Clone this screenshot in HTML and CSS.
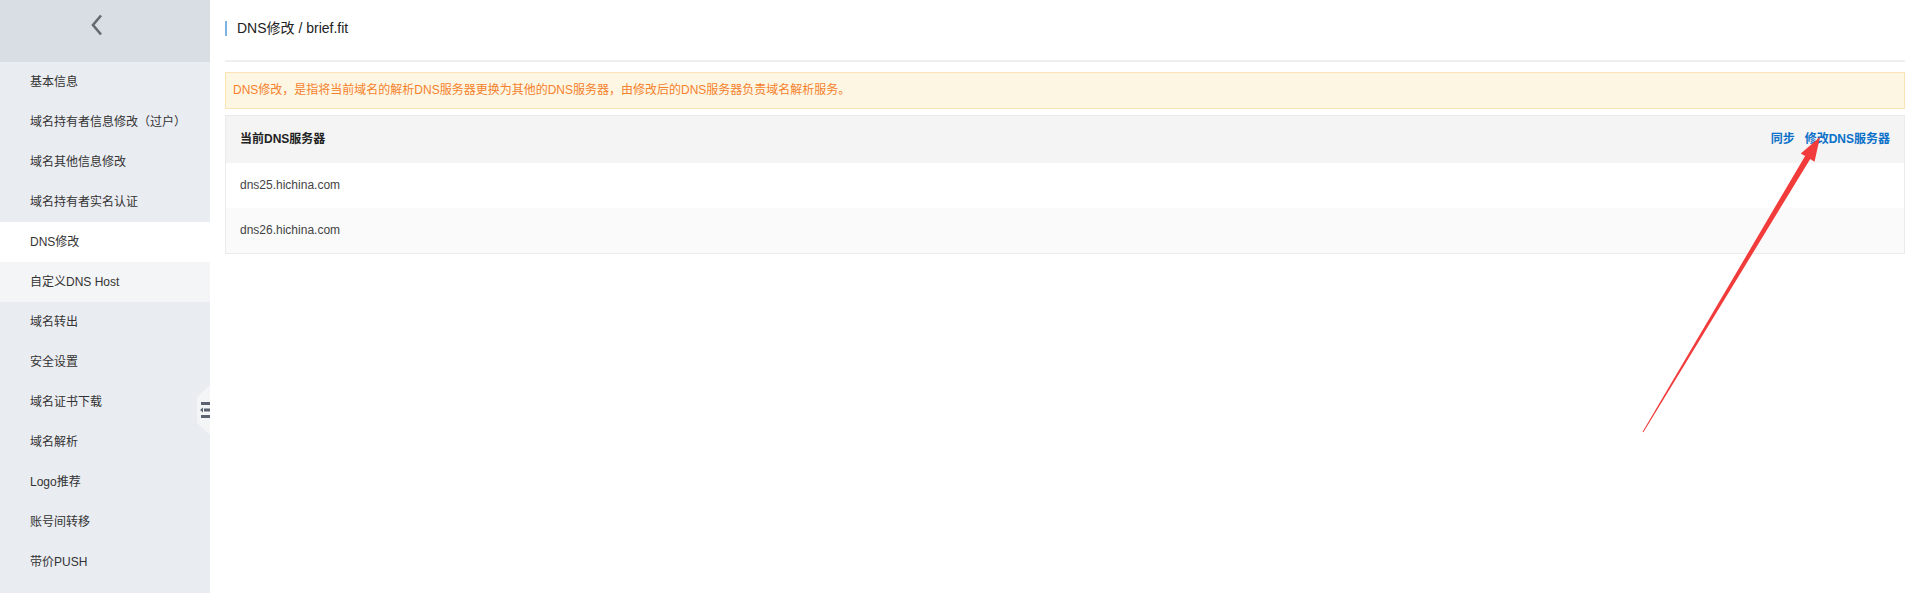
FILE: index.html
```html
<!DOCTYPE html>
<html lang="zh-CN">
<head>
<meta charset="utf-8">
<title>DNS修改</title>
<link rel="stylesheet" href="styles.css">
</head>
<body>
<div class="page">
  <aside class="sidebar">
    <div class="side-head">
      <svg class="back" width="12" height="22" viewBox="0 0 12 22"><path d="M10 1.5 L2 11 L10 20.5" fill="none" stroke="#666a70" stroke-width="2.6"/></svg>
    </div>
    <ul class="menu">
      <li>基本信息</li>
      <li>域名持有者信息修改（过户）</li>
      <li>域名其他信息修改</li>
      <li>域名持有者实名认证</li>
      <li class="active">DNS修改</li>
      <li class="hover">自定义DNS Host</li>
      <li>域名转出</li>
      <li>安全设置</li>
      <li>域名证书下载</li>
      <li>域名解析</li>
      <li>Logo推荐</li>
      <li>账号间转移</li>
      <li>带价PUSH</li>
    </ul>
    <div class="collapse">
      <svg width="11" height="18" viewBox="0 0 11 18"><rect x="1" y="1" width="10" height="3" fill="#5b6372"/><rect x="4" y="7.5" width="7" height="3" fill="#5b6372"/><path d="M0 9 L3 6.5 L3 11.5 Z" fill="#5b6372"/><rect x="1" y="14" width="10" height="3" fill="#5b6372"/></svg>
    </div>
  </aside>
  <main class="main">
    <div class="title-bar"><h1 class="title">DNS修改 / brief.fit</h1></div>
    <div class="notice">DNS修改，是指将当前域名的解析DNS服务器更换为其他的DNS服务器，由修改后的DNS服务器负责域名解析服务。</div>
    <div class="dns-table">
      <div class="row head">
        <span class="th">当前DNS服务器</span>
        <span class="actions"><a class="link">同步</a><a class="link">修改DNS服务器</a></span>
      </div>
      <div class="row">dns25.hichina.com</div>
      <div class="row alt">dns26.hichina.com</div>
    </div>
  </main>
  <svg class="annotation" width="1920" height="593" viewBox="0 0 1920 593">
    <polygon points="1642.6,431.7 1805.1,156.0 1800.8,153.5 1820,137 1814.5,161.7 1810.2,159.1 1643.4,432.3" fill="#f23b3b"/>
  </svg>
</div>
</body>
</html>
```
FILE: styles.css
```css
* { box-sizing: border-box; }
html, body { margin: 0; padding: 0; }
body {
  font-family: "Liberation Sans", "Noto Sans CJK SC", sans-serif;
  font-size: 12px;
  color: #333;
  background: #fff;
}
.page {
  position: relative;
  display: flex;
  width: 1920px;
  height: 593px;
  overflow: hidden;
}
.sidebar {
  position: relative;
  width: 210px;
  flex: none;
  background: #e9ecf1;
}
.side-head {
  height: 62px;
  background: #d9dde4;
  display: flex;
  align-items: center;
  justify-content: center;
  padding-bottom: 12px;
  padding-right: 16px;
}
.menu {
  list-style: none;
  margin: 0;
  padding: 0;
}
.menu li {
  height: 40px;
  line-height: 41px;
  padding-left: 30px;
  color: #333;
  white-space: nowrap;
}
.menu li.active { background: #fff; }
.menu li.hover { background: #f4f5f7; }
.collapse {
  position: absolute;
  right: 0;
  top: 385px;
  width: 13px;
  height: 50px;
  background: #f4f5f7;
  clip-path: polygon(0 12px, 13px 0, 13px 50px, 0 38px);
  display: flex;
  align-items: center;
  justify-content: flex-end;
}
.collapse svg { display: block; margin-right: -1px; }
.main {
  flex: 1;
  padding: 0 15px;
}
.title-bar {
  height: 62px;
  border-bottom: 2px solid #efefef;
  padding-top: 21px;
}
.title {
  margin: 0;
  font-size: 14px;
  font-weight: normal;
  line-height: 15px;
  color: #222;
  border-left: 2px solid #7fb2e0;
  padding-left: 10px;
}
.notice {
  margin-top: 10px;
  height: 37px;
  line-height: 35px;
  background: #fdf6e3;
  border: 1px solid #fbe3b6;
  color: #f5812c;
  padding-left: 7px;
}
.dns-table {
  margin-top: 6px;
  border: 1px solid #ebebeb;
}
.row {
  height: 45px;
  line-height: 45px;
  padding: 0 14px;
  color: #444;
  background: #fff;
}
.row.alt { background: #fafafa; }
.row.head {
  height: 47px;
  line-height: 47px;
  background: #f4f4f4;
  display: flex;
  justify-content: space-between;
}
.th { font-weight: bold; color: #222; }
.actions { display: flex; gap: 10px; }
.link {
  color: #0a70c8;
  font-weight: bold;
  cursor: pointer;
}
.annotation {
  position: absolute;
  left: 0;
  top: 0;
  pointer-events: none;
}
```
